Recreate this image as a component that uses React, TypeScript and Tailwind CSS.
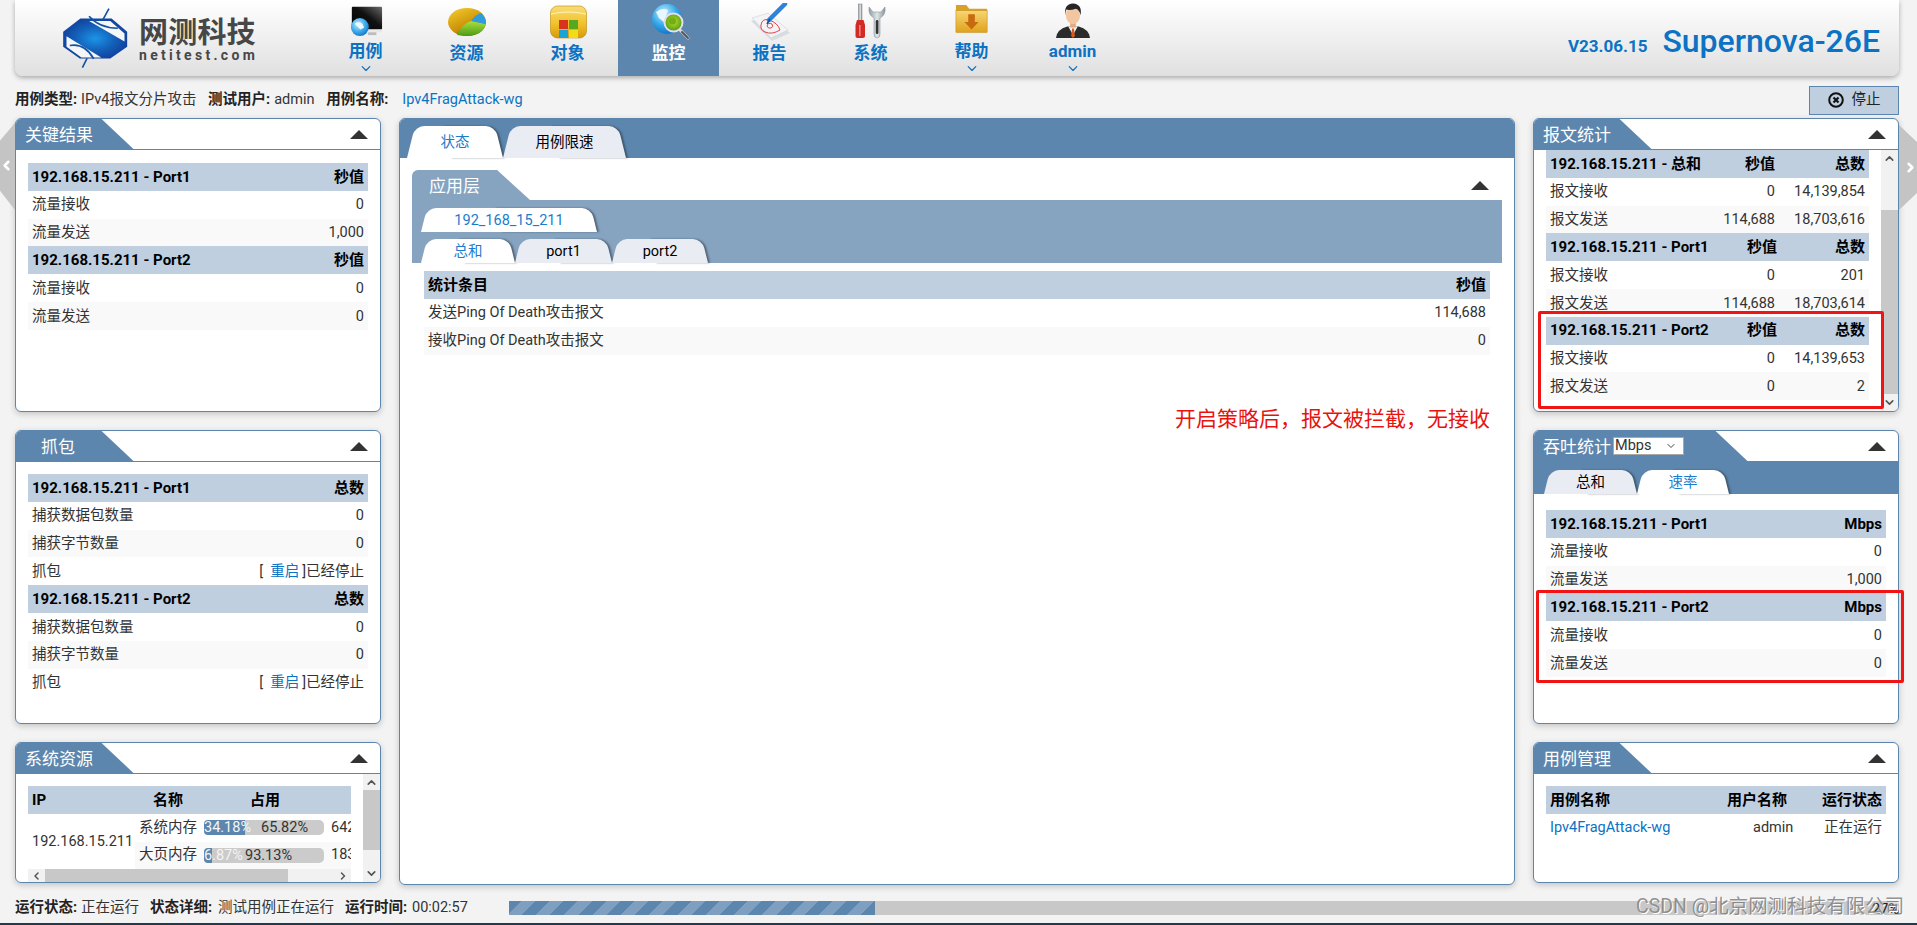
import { ReactNode } from "react";
import { ChevronDown, ChevronLeft, ChevronRight, ChevronUp } from "lucide-react";

const font = "font-['Roboto','Noto_Sans_CJK_SC',sans-serif]";

function Logo() {
  return (
    <div className="flex items-center gap-[11px] pl-[48px] w-[300px]">
      <svg width="65" height="63" viewBox="40 20 195 190" className="shrink-0">
        <defs>
          <radialGradient id="logoBlue" cx="50%" cy="50%" r="55%">
            <stop offset="0%" stopColor="#1b95e8" />
            <stop offset="55%" stopColor="#1360b8" />
            <stop offset="100%" stopColor="#123f9c" />
          </radialGradient>
        </defs>
        <polygon points="40,95 92,55 186,55 233,95 233,140 182,175 90,175 40,140" fill="url(#logoBlue)" />
        <path d="M118 62 L182 62 L225 100 L225 124 Z" fill="#f4f6f8" />
        <path d="M50 108 L155 172 L95 172 L50 140 Z" fill="#f4f6f8" />
        <path d="M118 48 Q150 84 205 84" fill="none" stroke="#1450a3" strokeWidth="5" />
        <path d="M60 136 Q105 128 132 176" fill="none" stroke="#1450a3" strokeWidth="5" />
        <path d="M178 25 L160 58" stroke="#1450a3" strokeWidth="5" />
        <path d="M98 203 L112 175" stroke="#1450a3" strokeWidth="5" />
      </svg>
      <div className="flex flex-col mt-[4px]">
        <span className="text-[29px] leading-[30px] font-bold text-[#474747] tracking-[0.2px]">网测科技</span>
        <span className="text-[14px] leading-[14px] font-bold text-[#474747] tracking-[3.3px] whitespace-nowrap">netitest.com</span>
      </div>
    </div>
  );
}

function IconCase() {
  return (
    <svg width="44" height="38" viewBox="0 0 44 38">
      <defs>
        <linearGradient id="mon" x1="1" y1="0" x2="0" y2="1">
          <stop offset="0%" stopColor="#6b6b6b" />
          <stop offset="45%" stopColor="#111" />
          <stop offset="100%" stopColor="#000" />
        </linearGradient>
        <radialGradient id="globe1" cx="40%" cy="35%" r="70%">
          <stop offset="0%" stopColor="#c4ecfc" />
          <stop offset="60%" stopColor="#3aa8ea" />
          <stop offset="100%" stopColor="#1274c6" />
        </radialGradient>
      </defs>
      <rect x="7" y="4" width="32" height="24" fill="url(#mon)" rx="1" />
      <rect x="7" y="28" width="32" height="3" fill="#e8e8e8" />
      <rect x="24" y="31" width="9" height="3" fill="#bcbcbc" />
      <circle cx="15.5" cy="25.5" r="9.5" fill="url(#globe1)" />
      <path d="M10 22 Q14 19 18 22 L20 26 L16 28 L13 25 Z" fill="#f0fafe" />
    </svg>
  );
}

function IconPie() {
  return (
    <svg width="44" height="38" viewBox="0 0 44 38">
      <defs>
        <linearGradient id="pieGold" x1="0" y1="0" x2="0.6" y2="1">
          <stop offset="0%" stopColor="#f6cf2e" />
          <stop offset="70%" stopColor="#c98f06" />
          <stop offset="100%" stopColor="#6d5208" />
        </linearGradient>
        <linearGradient id="pieGreen" x1="0" y1="0" x2="0" y2="1">
          <stop offset="0%" stopColor="#a8e040" />
          <stop offset="100%" stopColor="#4d9a14" />
        </linearGradient>
      </defs>
      <ellipse cx="22" cy="19" rx="19" ry="14" fill="url(#pieGold)" />
      <path d="M12 32 Q18 20 26 18 L41 21 Q38 33 20 33 Z" fill="url(#pieGreen)" />
      <path d="M26 18 Q30 12 36 10 Q41 14 41 21 Z" fill="#2c9ee0" />
    </svg>
  );
}

function IconObject() {
  return (
    <svg width="44" height="38" viewBox="0 0 44 38">
      <defs>
        <linearGradient id="objGold" x1="0" y1="0" x2="0" y2="1">
          <stop offset="0%" stopColor="#f9dc78" />
          <stop offset="55%" stopColor="#f1c22a" />
          <stop offset="100%" stopColor="#d69a0c" />
        </linearGradient>
      </defs>
      <rect x="4.5" y="3" width="36" height="32" rx="7" fill="url(#objGold)" stroke="#b98a10" strokeWidth="0.6" />
      <path d="M5 11 Q22 7 40 11" fill="none" stroke="#fff3b8" strokeWidth="1.2" />
      <rect x="13" y="17" width="9" height="9" fill="#d8341c" />
      <rect x="23" y="17" width="9" height="9" fill="#57a81e" />
      <rect x="13" y="27" width="9" height="8" fill="#19a4d8" />
      <rect x="23" y="27" width="9" height="8" fill="#f2dc14" />
    </svg>
  );
}

function IconMonitor() {
  return (
    <svg width="44" height="38" viewBox="0 0 44 38">
      <defs>
        <radialGradient id="globe2" cx="40%" cy="30%" r="75%">
          <stop offset="0%" stopColor="#c8effc" />
          <stop offset="55%" stopColor="#35a8ea" />
          <stop offset="100%" stopColor="#0e6fc0" />
        </radialGradient>
        <radialGradient id="lens" cx="50%" cy="45%" r="55%">
          <stop offset="0%" stopColor="#b7e02f" />
          <stop offset="100%" stopColor="#4f9a10" />
        </radialGradient>
      </defs>
      <circle cx="20" cy="16" r="15" fill="url(#globe2)" />
      <path d="M9 9 Q15 4 21 7 L19 13 L24 17 L18 20 L12 15 Z" fill="#e6f8fe" />
      <path d="M32 26 L41 35" stroke="#d8d8e2" strokeWidth="3" strokeLinecap="round" />
      <path d="M35 29 L41 35" stroke="#555" strokeWidth="2" strokeLinecap="round" />
      <circle cx="26.5" cy="19.5" r="9" fill="url(#lens)" stroke="#e4def0" strokeWidth="2" />
      <circle cx="25.5" cy="18" r="3.5" fill="#76ad12" />
    </svg>
  );
}

function IconReport() {
  return (
    <svg width="44" height="38" viewBox="0 0 44 38">
      <polygon points="3,18 21,12 42,30 24,38" fill="#d7dde3" />
      <polygon points="4,15 20,10 40,27 23,35" fill="#f2f4f6" stroke="#c5ccd2" strokeWidth="0.5" />
      <path d="M13 22 Q14 15 21 17 Q30 20 32 27 Q24 32 17 29 Q12 27 13 22 Z" fill="none" stroke="#e2454a" strokeWidth="1" />
      <path d="M19 23 Q20 19 24 21 Q26 24 23 25 Q20 26 19 23 Z" fill="none" stroke="#e2454a" strokeWidth="1" />
      <path d="M37 1 L21 17" stroke="#2f82d8" strokeWidth="4.5" strokeLinecap="round" />
      <path d="M22 16 L19 21" stroke="#1d4f95" strokeWidth="1.6" />
    </svg>
  );
}

function IconSystem() {
  return (
    <svg width="44" height="38" viewBox="0 0 44 38">
      <defs>
        <linearGradient id="steel" x1="0" y1="0" x2="1" y2="0">
          <stop offset="0%" stopColor="#8f9aa2" />
          <stop offset="50%" stopColor="#dfe5e8" />
          <stop offset="100%" stopColor="#8a949c" />
        </linearGradient>
      </defs>
      <rect x="9.5" y="1" width="3.5" height="17" fill="url(#steel)" stroke="#666" strokeWidth="0.4" />
      <path d="M8 17 H14.5 L16 22 V33 Q16 35 14 35 H8.5 Q6.5 35 6.5 33 V22 Z" fill="#d22a25" />
      <rect x="10" y="22" width="1.6" height="11" fill="#f1827c" />
      <path d="M20 4 Q19 12 25 15 V31 Q25 35 28 35 Q31 35 31 31 V15 Q37 12 36 4 L32 9 H24 Z" fill="url(#steel)" stroke="#7f8a92" strokeWidth="0.5" />
      <rect x="26.8" y="17" width="2.6" height="14" rx="1.3" fill="#333" />
    </svg>
  );
}

function IconHelp() {
  return (
    <svg width="44" height="38" viewBox="0 0 44 38">
      <defs>
        <linearGradient id="helpGold" x1="0" y1="0" x2="0" y2="1">
          <stop offset="0%" stopColor="#f6d673" />
          <stop offset="100%" stopColor="#e0a21c" />
        </linearGradient>
      </defs>
      <path d="M5 2 H16 L19 6 H38 V31 H5 Z" fill="#d9a12a" />
      <rect x="5" y="8" width="33" height="23" fill="url(#helpGold)" stroke="#bd8614" strokeWidth="0.5" />
      <path d="M18 12 H25 V20 H29 L21.5 28 L14 20 H18 Z" fill="#c86b10" />
    </svg>
  );
}

function IconUser() {
  return (
    <svg width="44" height="38" viewBox="0 0 44 38">
      <path d="M4 37 Q5 28 16 25 H28 Q39 28 40 37 Z" fill="#2b2b2b" />
      <polygon points="17,25 27,25 22,34" fill="#f4f4f4" />
      <polygon points="21,27 23,27 24,35 22,37 20,35" fill="#dd5a1c" />
      <rect x="19" y="19" width="6" height="7" fill="#e4a981" />
      <ellipse cx="22" cy="13" rx="7.5" ry="9.5" fill="#f3c6a2" />
      <path d="M14 13 Q12 1 22 0.5 Q32 1 30 13 Q29 7 25 6 Q19 8 15 7 Q14 9 14 13 Z" fill="#262626" />
    </svg>
  );
}

function NavItem({ label, icon, active, drop }: { label: string; icon: ReactNode; active?: boolean; drop?: boolean }) {
  return (
    <div className={`w-[101px] h-[76px] flex flex-col items-center pt-[3px] ${active ? "bg-[#5d86ae]" : ""}`}>
      {icon}
      <span className={`text-[17px] leading-[22px] font-bold mt-[1px] ${active ? "text-white" : "text-[#0b72c4]"}`}>{label}</span>
      {drop && <ChevronDown size={16} strokeWidth={2} className="text-[#0b72c4] -mt-[1px]" />}
    </div>
  );
}

function Triangle() {
  return (
    <svg width="18" height="9" viewBox="0 0 18 9" className="shrink-0">
      <polygon points="9,0 18,9 0,9" fill="#333" />
    </svg>
  );
}

function PanelTitle({ title, extra, pl }: { title: string; extra?: ReactNode; pl?: string }) {
  return (
    <div className="h-[31px] flex items-center justify-between pr-[12px] border-b border-[#5d86ae]">
      <div className={`h-[31px] flex items-center bg-[#5d86ae] text-white text-[17px] [clip-path:polygon(0_0,calc(100%-33px)_0,100%_100%,0_100%)] ${extra ? "w-[214px]" : "w-[118px]"} ${pl ?? "pl-[9px]"}`}>
        <span className="pt-[4px]">{title}</span>
        {extra}
      </div>
      <Triangle />
    </div>
  );
}

function Panel({ title, h, pl, children }: { title: string; h: string; pl?: string; children: ReactNode }) {
  return (
    <div className={`bg-white border border-[#5d86ae] rounded-[6px] overflow-hidden shadow-[0_2px_6px_rgba(0,0,0,0.2)] ${h}`}>
      <PanelTitle title={title} pl={pl} />
      {children}
    </div>
  );
}

function Tab({ label, w, h, active }: { label: string; w: string; h: string; active?: boolean }) {
  const fill = active ? "bg-white" : "bg-[#e9edf3]";
  return (
    <div className={`relative flex items-center justify-center text-[14.5px] ${w} ${h}`}>
      <span className={`absolute inset-y-0 left-0 w-[55%] origin-bottom -skew-x-[14deg] rounded-tl-[9px] ${fill}`} />
      <span className={`absolute inset-y-0 right-0 w-[55%] origin-bottom skew-x-[14deg] rounded-tr-[9px] shadow-[2px_0_2px_rgba(40,50,60,0.55)] ${fill}`} />
      <span className={`relative pt-[1px] ${active ? "text-[#1b7ccc]" : "text-black"}`}>{label}</span>
    </div>
  );
}

function HeadRow({ cols }: { cols: string[] }) {
  return (
    <div className="h-[27.8px] flex items-center bg-[#bfcfe0] px-[4px] font-bold text-black text-[15px]">
      <span className="flex-1 whitespace-nowrap">{cols[0]}</span>
      {cols.length === 3 && <span className="w-[70px] text-right">{cols[1]}</span>}
      <span className={cols.length === 3 ? "w-[90px] text-right" : "text-right"}>{cols[cols.length - 1]}</span>
    </div>
  );
}

function DataRow({ cols, alt, children }: { cols: string[]; alt?: boolean; children?: ReactNode }) {
  return (
    <div className={`h-[27.8px] pt-[1px] flex items-center px-[4px] text-[#333] text-[14.5px] ${alt ? "bg-[#f9f9f9]" : ""}`}>
      <span className="flex-1">{cols[0]}</span>
      {cols.length === 3 && <span className="w-[70px] text-right">{cols[1]}</span>}
      {children ?? <span className={cols.length === 3 ? "w-[90px] text-right" : "text-right"}>{cols[cols.length - 1]}</span>}
    </div>
  );
}

function Restart() {
  return (
    <span className="text-right">
      [<span className="ml-[7px] mr-[3px] text-[#0b72c4]">重启</span>]已经停止
    </span>
  );
}

function VScroll({ before, thumb }: { before: string; thumb: string }) {
  return (
    <div className="w-[17px] shrink-0 bg-[#f1f1f1] flex flex-col items-center relative">
      <ChevronUp size={13} strokeWidth={3} className="text-[#555] mt-[2px] shrink-0" />
      <div className={before} />
      <div className={`w-full bg-[#c8c8c8] ${thumb}`} />
      <ChevronDown size={13} strokeWidth={3} className="text-[#555] mt-auto mb-[2px] shrink-0" />
    </div>
  );
}

function Bar({ used, free, usedW, freeMl }: { used: string; free: string; usedW: string; freeMl: string }) {
  return (
    <div className="relative w-[120px] h-[15px] shrink-0 rounded-[5px] bg-[#cbcbcb] text-[14.5px] leading-[15px] whitespace-nowrap">
      <div className={`absolute inset-y-0 left-0 rounded-l-[4px] bg-[#5d86ae] ${usedW}`} />
      <span className="absolute left-0 top-0 text-[#f4f4f4]">{used}</span>
      <span className={`absolute top-0 text-[#333] ${freeMl}`}>{free}</span>
    </div>
  );
}

export default function App() {
  return (
    <div className={`${font} relative w-[1917px] h-[925px] overflow-hidden bg-[#f3f3f3] flex flex-col`}>
      {/* header */}
      <header className="ml-[15px] mr-[18px] h-[76px] shrink-0 flex items-center rounded-b-[8px] bg-gradient-to-b from-white to-[#e0e0e0] shadow-[0_2px_5px_rgba(0,0,0,0.3)]">
        <Logo />
        <NavItem label="用例" icon={<IconCase />} drop />
        <NavItem label="资源" icon={<IconPie />} />
        <NavItem label="对象" icon={<IconObject />} />
        <NavItem label="监控" icon={<IconMonitor />} active />
        <NavItem label="报告" icon={<IconReport />} />
        <NavItem label="系统" icon={<IconSystem />} />
        <NavItem label="帮助" icon={<IconHelp />} drop />
        <NavItem label="admin" icon={<IconUser />} drop />
        <div className="ml-auto flex items-baseline gap-[15px] pr-[19px] pt-[6px] text-[#0b72c4]">
          <span className="text-[17px] font-bold">V23.06.15</span>
          <span className="text-[32px] font-medium leading-[36px]">Supernova-26E</span>
        </div>
      </header>

      {/* case info */}
      <div className="ml-[15px] mr-[18px] h-[42px] shrink-0 flex items-center justify-between text-[14.5px] text-[#333]">
        <div className="flex items-center mt-[5px]">
          <b className="text-[#222]">用例类型:</b>
          <span className="ml-[4px] w-[127px]">IPv4报文分片攻击</span>
          <b className="text-[#222]">测试用户:</b>
          <span className="ml-[4px] w-[52px]">admin</span>
          <b className="text-[#222]">用例名称:</b>
          <span className="ml-[14px] text-[#0b72c4]">Ipv4FragAttack-wg</span>
        </div>
        <button className="w-[90px] h-[29px] mt-[6px] flex items-center justify-center gap-[8px] bg-[#bfcfe0] border border-[#5d86ae] text-[14.5px] text-[#222]">
          <svg width="16" height="16" viewBox="0 0 16 16">
            <circle cx="8" cy="8" r="6.8" fill="none" stroke="#111" strokeWidth="2" />
            <path d="M5.5 5.5 L10.5 10.5 M10.5 5.5 L5.5 10.5" stroke="#111" strokeWidth="2.2" />
          </svg>
          停止
        </button>
      </div>

      {/* panels */}
      <div className="flex ml-[15px] mr-[18px] gap-[18px] items-start">
        <div className="w-[366px] shrink-0 flex flex-col gap-[18px]">
          <Panel title="关键结果" h="h-[294px]">
            <div className="px-[12px] pt-[13px]">
              <HeadRow cols={["192.168.15.211 - Port1", "秒值"]} />
              <DataRow cols={["流量接收", "0"]} />
              <DataRow cols={["流量发送", "1,000"]} alt />
              <HeadRow cols={["192.168.15.211 - Port2", "秒值"]} />
              <DataRow cols={["流量接收", "0"]} />
              <DataRow cols={["流量发送", "0"]} alt />
            </div>
          </Panel>
          <Panel title="抓包" h="h-[294px]" pl="pl-[25px]">
            <div className="px-[12px] pt-[12px]">
              <HeadRow cols={["192.168.15.211 - Port1", "总数"]} />
              <DataRow cols={["捕获数据包数量", "0"]} />
              <DataRow cols={["捕获字节数量", "0"]} alt />
              <DataRow cols={["抓包", ""]}><Restart /></DataRow>
              <HeadRow cols={["192.168.15.211 - Port2", "总数"]} />
              <DataRow cols={["捕获数据包数量", "0"]} />
              <DataRow cols={["捕获字节数量", "0"]} alt />
              <DataRow cols={["抓包", ""]}><Restart /></DataRow>
            </div>
          </Panel>
          <Panel title="系统资源" h="h-[141px]">
            <div className="flex h-[108px]">
              <div className="flex-1 min-w-0 flex flex-col pl-[12px] pr-[12px] pt-[12px]">
                <div className="h-[28px] shrink-0 bg-[#bfcfe0] flex items-center font-bold text-black text-[15px]">
                  <span className="w-[125px] pl-[4px]">IP</span>
                  <span className="w-[97px]">名称</span>
                  <span>占用</span>
                </div>
                <div className="h-[55px] shrink-0 flex items-center text-[14.5px] text-[#333] overflow-hidden">
                  <span className="w-[107px] shrink-0 pl-[4px]">192.168.15.211</span>
                  <div className="flex-1 min-w-0 flex flex-col">
                    <div className="h-[27.5px] flex items-center pl-[4px] overflow-hidden">
                      <span className="w-[65px] shrink-0">系统内存</span>
                      <Bar used="34.18%" free="65.82%" usedW="w-[41px]" freeMl="left-[57px]" />
                      <span className="shrink-0 ml-[7px]">642</span>
                    </div>
                    <div className="h-[27.5px] flex items-center pl-[4px] bg-[#f9f9f9] overflow-hidden">
                      <span className="w-[65px] shrink-0">大页内存</span>
                      <Bar used="6.87%" free="93.13%" usedW="w-[8px]" freeMl="left-[41px]" />
                      <span className="shrink-0 ml-[7px]">183</span>
                    </div>
                  </div>
                </div>
                <div className="h-[13px] shrink-0 bg-[#f1f1f1] flex items-center">
                  <ChevronLeft size={12} strokeWidth={3} className="text-[#555] w-[17px] shrink-0" />
                  <div className="w-[243px] h-full bg-[#c8c8c8]" />
                  <ChevronRight size={12} strokeWidth={3} className="text-[#555] ml-auto mr-[2px]" />
                </div>
              </div>
              <VScroll before="h-[0px]" thumb="h-[60px] mt-[1px]" />
            </div>
          </Panel>
        </div>

        {/* center */}
        <div className="flex-1 min-w-0 h-[767px] bg-white border border-[#5d86ae] rounded-[6px] overflow-hidden shadow-[0_2px_6px_rgba(0,0,0,0.2)]">
          <div className="h-[39px] bg-[#5d86ae] flex items-end pl-[7px]">
            <Tab label="状态" w="w-[96px]" h="h-[32px]" active />
            <Tab label="用例限速" w="w-[123px]" h="h-[32px]" />
          </div>
          <div className="mx-[12px] mt-[12px]">
            <div className="h-[30px] flex items-center justify-between pr-[13px]">
              <div className="w-[118px] h-[30px] flex items-center pl-[17px] pt-[4px] bg-[#86a3c0] text-white text-[17px] rounded-tl-[6px] [clip-path:polygon(0_0,calc(100%-33px)_0,100%_100%,0_100%)]">应用层</div>
              <Triangle />
            </div>
            <div className="h-[63px] bg-[#86a3c0] pt-[8px] pl-[9px] flex flex-col gap-[7px]">
              <Tab label="192_168_15_211" w="w-[176px]" h="h-[24px]" active />
              <div className="flex">
                <Tab label="总和" w="w-[94px]" h="h-[24px]" active />
                <Tab label="port1" w="w-[97px]" h="h-[24px]" />
                <Tab label="port2" w="w-[96px]" h="h-[24px]" />
              </div>
            </div>
            <div className="mx-[12px] mt-[8px]">
              <div className="h-[28px] flex items-center justify-between bg-[#bfcfe0] px-[4px] font-bold text-black text-[15px]">
                <span>统计条目</span>
                <span>秒值</span>
              </div>
              <div className="h-[28px] flex items-center justify-between px-[4px] text-[14.5px] text-[#333]">
                <span>发送Ping Of Death攻击报文</span>
                <span>114,688</span>
              </div>
              <div className="h-[28px] flex items-center justify-between px-[4px] text-[14.5px] text-[#333] bg-[#f9f9f9]">
                <span>接收Ping Of Death攻击报文</span>
                <span>0</span>
              </div>
              <div className="mt-[49px] h-[30px] leading-[30px] text-right text-[21px] text-[#e8130f]">开启策略后，报文被拦截，无接收</div>
            </div>
          </div>
        </div>

        {/* right */}
        <div className="w-[366px] shrink-0 flex flex-col gap-[18px]">
          <Panel title="报文统计" h="h-[294px]">
            <div className="flex h-[261px]">
              <div className="flex-1 min-w-0 px-[12px] overflow-hidden">
                <HeadRow cols={["192.168.15.211 - 总和", "秒值", "总数"]} />
                <DataRow cols={["报文接收", "0", "14,139,854"]} />
                <DataRow cols={["报文发送", "114,688", "18,703,616"]} alt />
                <HeadRow cols={["192.168.15.211 - Port1", "秒值", "总数"]} />
                <DataRow cols={["报文接收", "0", "201"]} />
                <DataRow cols={["报文发送", "114,688", "18,703,614"]} alt />
                <HeadRow cols={["192.168.15.211 - Port2", "秒值", "总数"]} />
                <DataRow cols={["报文接收", "0", "14,139,653"]} />
                <DataRow cols={["报文发送", "0", "2"]} alt />
              </div>
              <VScroll before="h-[45px]" thumb="h-[184px]" />
            </div>
          </Panel>
          <div className="h-[294px] bg-white border border-[#5d86ae] rounded-[6px] overflow-hidden shadow-[0_2px_6px_rgba(0,0,0,0.2)]">
            <PanelTitle
              title="吞吐统计"
              extra={
                <div className="relative ml-[2px] w-[71px] h-[18px]">
                  <select className="block appearance-none w-full h-full bg-white border border-[#a8a8a8] pl-[1px] text-[14.5px] leading-[14px] text-[#333] outline-none">
                    <option>Mbps</option>
                  </select>
                  <ChevronDown size={12} strokeWidth={2} className="absolute right-[7px] top-[3px] text-[#444] pointer-events-none" />
                </div>
              }
            />
            <div className="h-[32px] bg-[#5d86ae] flex items-end pl-[10px]">
              <Tab label="总和" w="w-[93px]" h="h-[24px]" />
              <Tab label="速率" w="w-[92px]" h="h-[24px]" active />
            </div>
            <div className="px-[12px] pt-[16px]">
              <HeadRow cols={["192.168.15.211 - Port1", "Mbps"]} />
              <DataRow cols={["流量接收", "0"]} />
              <DataRow cols={["流量发送", "1,000"]} alt />
              <HeadRow cols={["192.168.15.211 - Port2", "Mbps"]} />
              <DataRow cols={["流量接收", "0"]} />
              <DataRow cols={["流量发送", "0"]} alt />
            </div>
          </div>
          <Panel title="用例管理" h="h-[141px]">
            <div className="px-[12px] pt-[12px]">
              <div className="h-[28px] flex items-center bg-[#bfcfe0] px-[4px] font-bold text-black text-[15px]">
                <span className="flex-1">用例名称</span>
                <span className="w-[95px] text-left">用户名称</span>
                <span className="w-[60px] text-right whitespace-nowrap">运行状态</span>
              </div>
              <div className="h-[28px] flex items-center px-[4px] text-[14.5px] text-[#333]">
                <span className="flex-1 text-[#0b72c4]">Ipv4FragAttack-wg</span>
                <span className="w-[40px] text-right mr-[29px]">admin</span>
                <span className="w-[60px] text-right whitespace-nowrap">正在运行</span>
              </div>
            </div>
          </Panel>
        </div>
      </div>

      {/* status bar */}
      <div className="mt-auto ml-[15px] mr-[18px] h-[14px] mb-[8px] flex items-center text-[14.5px] text-[#333]">
        <b className="text-[#222] w-[62px] shrink-0 whitespace-nowrap">运行状态:</b>
        <span className="ml-[4px] w-[69px] shrink-0">正在运行</span>
        <b className="text-[#222] w-[64px] shrink-0 whitespace-nowrap">状态详细:</b>
        <span className="ml-[4px] w-[127px] shrink-0">测试用例正在运行</span>
        <b className="text-[#222] w-[63px] shrink-0 whitespace-nowrap">运行时间:</b>
        <span className="ml-[4px] w-[97px] shrink-0">00:02:57</span>
        <div className="relative flex-1 h-[14px] bg-[#c8c8c8]">
          <div className="w-[26.3%] h-full bg-[repeating-linear-gradient(-45deg,#5d86ae_0,#5d86ae_10px,#7f9fc0_10px,#7f9fc0_20px)]" />
          <span className="absolute right-0 top-[-2px] text-[#222]">27%</span>
        </div>
      </div>
      <div className="h-[2px] bg-[#1f3a4f] shrink-0" />

      {/* side arrows */}
      <div className="absolute left-0 top-[123px] w-[15px] h-[87px] flex items-center justify-start bg-[#c4c4c4] [clip-path:polygon(100%_0,100%_100%,0_78%,0_20%)]">
        <ChevronLeft size={15} strokeWidth={4} className="text-white -ml-[1px] -mt-[2px]" />
      </div>
      <div className="absolute right-0 top-[125px] w-[18px] h-[85px] flex items-center justify-end bg-[#c4c4c4] [clip-path:polygon(0_0,100%_20%,100%_80%,0_100%)]">
        <ChevronRight size={15} strokeWidth={4} className="text-white -mr-[1px]" />
      </div>

      {/* annotations */}
      <div className="absolute left-[1538px] top-[311px] w-[346px] h-[98px] border-[3px] border-[#f01414] rounded-[2px]" />
      <div className="absolute left-[1536px] top-[590px] w-[368px] h-[93px] border-[3px] border-[#f01414] rounded-[2px]" />
      <div className="absolute left-[1636px] top-[894px] text-[19.5px] leading-[26px] text-[#777]/80 [text-shadow:1px_1px_0_#fff] whitespace-nowrap">CSDN @北京网测科技有限公司</div>
    </div>
  );
}
